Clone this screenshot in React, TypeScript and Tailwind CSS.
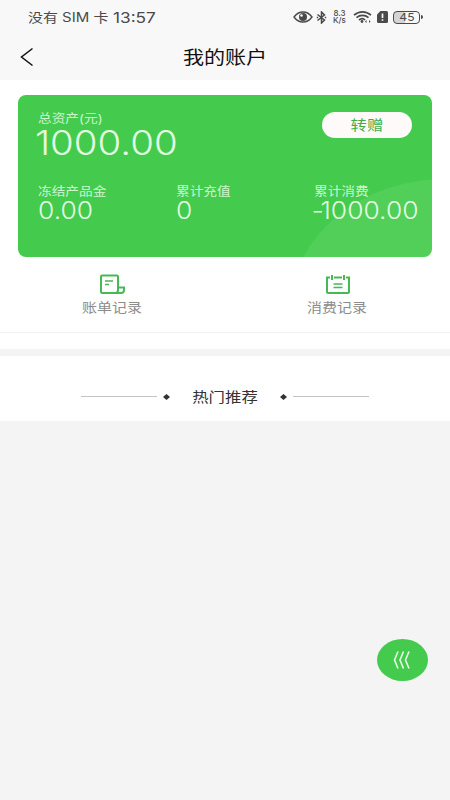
import type { ReactNode } from "react";

const STATS = [
  { label: "冻结产品金", sign: "", value: "0.00" },
  { label: "累计充值", sign: "", value: "0" },
  { label: "累计消费", sign: "-", value: "1000.00" },
];

function StatusBar() {
  return (
    <div className="flex h-[34px] items-center justify-between pl-7 pr-[27px] text-[#4a4a4a]">
      <div className="flex origin-left scale-x-[1.15] items-center whitespace-nowrap pt-px">
        <span className="text-[13px]">没有 SIM 卡</span>
        <span className="ml-1 pt-px text-[15px]">13:57</span>
      </div>
      <div className="flex items-center">
        {/* Modo lectura */}
        <svg className="h-3 w-5" viewBox="0 0 20 12" fill="none">
          <path d="M1 6C4 1.800 7 1 10 1s6 .8 9 5c-3 4.200-6 5-9 5S4 10.200 1 6Z" stroke="currentColor" strokeWidth="1.400" />
          <circle cx="10" cy="6" r="4" fill="currentColor" />
          <circle cx="8.500" cy="4.500" r="1.300" fill="#f8f8f8" />
        </svg>
        {/* Bluetooth */}
        <svg className="ml-[3px] h-[13px] w-[11px]" viewBox="0 0 11 13" fill="none" stroke="currentColor" strokeWidth="1.500">
          <path d="M1.500 3.500 8.500 9 5.500 12V1l3 3-7 5.500" />
          <path d="M.8 6.500h1.400M8.800 6.500h1.400" strokeWidth="1.600" />
        </svg>
        <div className="ml-[5px] w-[15px] whitespace-nowrap text-center text-[8px] font-medium leading-[7px]">
          <div>8.3</div>
          <div>K/s</div>
        </div>
        {/* WiFi */}
        <svg className="ml-1.5 h-3 w-[19px]" viewBox="0 0 19 12" fill="none" stroke="currentColor" strokeWidth="1.700">
          <path d="M1 4.200C6-.2 13-.2 18 4.200M3.500 6.700c3.500-3 8.500-3 12 0M6 9c2-1.700 4.500-1.700 6 0" />
          <circle cx="9" cy="10.500" r="1.400" fill="currentColor" stroke="none" />
          <path d="m12 10.500 1.500-1.400v2.800ZM17.500 10.500 16 9.100v2.800Z" fill="currentColor" stroke="none" />
        </svg>
        {/* SIM */}
        <svg className="ml-[5px] h-3 w-[11px]" viewBox="0 0 11 12">
          <path d="M3.500 0H9.500Q11 0 11 1.500v9Q11 12 9.500 12h-8Q0 12 0 10.500V3.500Z" fill="currentColor" />
          <path d="M5.500 2.500v4.500M5.500 8.200v1.600" stroke="#f8f8f8" strokeWidth="1.700" />
        </svg>
        <div className="ml-[5px] flex h-[13px] w-[27px] items-center justify-center rounded border border-[#4a4a4a] bg-[linear-gradient(90deg,#d4d4d4_45%,#f8f8f8_45%)] text-[11px] leading-none">
          <span className="scale-x-[1.1]">45</span>
        </div>
        <div className="ml-px h-1 w-0.5 rounded-r bg-[#4a4a4a]" />
      </div>
    </div>
  );
}

function Shortcut({ label, children }: { label: string; children: ReactNode }) {
  return (
    <div className="flex w-1/2 flex-col items-center">
      {children}
      <span className="mt-0.5 scale-x-[1.15] text-[13px] leading-5 text-[#8c8c8c]">{label}</span>
    </div>
  );
}

function Divider() {
  return <div className="h-px w-[76px] bg-[#c4c4c4]" />;
}

function Diamond() {
  return (
    <svg className="h-[6px] w-[7px]" viewBox="0 0 7 6">
      <path d="M3.500 0 7 3 3.500 6 0 3Z" fill="#333" />
    </svg>
  );
}

export default function App() {
  return (
    <div className="relative h-[800px] w-[450px] overflow-hidden bg-[#f4f4f4] font-[Inter,'Noto_Sans_CJK_SC',sans-serif]">
      <header className="h-20 bg-[#f8f8f8]">
        <StatusBar />
        <div className="grid h-[46px] grid-cols-[1fr_auto_1fr] items-center">
          <svg className="ml-5 h-5 w-[14px]" viewBox="0 0 14 20" fill="none" stroke="#111" strokeWidth="1.500">
            <path d="M12.500 1.500 1.500 10l11 8.500" />
          </svg>
          <h1 className="scale-x-[1.17] pt-px text-[18px] leading-6 text-[#111]">我的账户</h1>
        </div>
      </header>

      <section className="h-[253px] border-b border-[#f1f1f1] bg-white px-[18px] pt-[15px]">
        <div className="relative h-[162px] overflow-hidden rounded-lg bg-[#44cb4d] text-[#e2fbe1]">
          {/* Círculo claro de la esquina */}
          <div className="absolute left-[273px] top-[84px] h-[258px] w-[310px] rounded-[50%] bg-white/[0.07]" />
          <div className="relative flex h-[88px] justify-between pl-5 pr-5 pt-4">
            <div className="flex flex-col items-start whitespace-nowrap">
              <span className="origin-left scale-x-[1.14] text-[12px] leading-4 text-[#cdf5cd]">总资产(元)</span>
              <span className="-ml-[3px] origin-left scale-x-[1.13] text-[34px] font-light leading-8">1000.00</span>
            </div>
            <button className="mt-px flex h-[26px] w-[90px] items-center justify-center rounded-full bg-[#fdfaf9] pb-px text-[14px] text-[#3fae4a]">
              <span className="scale-x-[1.17]">转赠</span>
            </button>
          </div>
          <div className="relative grid grid-cols-3">
            {STATS.map(({ label, sign, value }) => (
              <div key={label} className="flex flex-col items-start whitespace-nowrap pl-5">
                <span className="origin-left scale-x-[1.14] text-[12px] leading-[18px] text-[#cdf5cd]">{label}</span>
                <span className="origin-left scale-x-[1.1] text-[24px] font-light leading-5">
                  {sign && <span className="-ml-0.5 -mr-[3px]">{sign}</span>}
                  {value}
                </span>
              </div>
            ))}
          </div>
        </div>

        <div className="-mx-[18px] flex pt-[17px]">
          <Shortcut label="账单记录">
            <svg className="h-[21px] w-[25px]" viewBox="0 0 25 21" fill="none" stroke="#46b955" strokeWidth="2">
              <path d="M18 13V2.500Q18 1.500 17 1.500H2Q1 1.500 1 2.500v15Q1 19 2.500 19H21q3 0 3-3v-2.500h-6V16q0 3-2.500 3" />
              <path d="M5 7h8M5 10.500h4" strokeWidth="1.600" />
            </svg>
          </Shortcut>
          <Shortcut label="消费记录">
            <svg className="h-[21px] w-6" viewBox="0 0 24 21" fill="none" stroke="#46b955" strokeWidth="2">
              <path d="M4 3.500H1V18q0 1 1 1h20q1 0 1-1V3.500h-3M8 3.500h8M6 1v5M18 1v5" />
              <path d="M7.500 10h9M7.500 13.500h9" strokeWidth="1.600" />
            </svg>
          </Shortcut>
        </div>
      </section>

      <div className="h-4 bg-white" />
      <div className="h-[7px]" />

      <section className="flex h-[65px] items-center bg-white pl-[81px] pt-4">
        <Divider />
        <div className="ml-1.5">
          <Diamond />
        </div>
        <h2 className="flex w-[110px] justify-center text-[14px] leading-5 text-[#333]">
          <span className="scale-x-[1.17]">热门推荐</span>
        </h2>
        <Diamond />
        <div className="ml-1.5">
          <Divider />
        </div>
      </section>

      {/* Botón flotante */}
      <button className="absolute left-[377px] top-[639px] flex h-[42px] w-[51px] items-center justify-center rounded-[50%] bg-[#44cb4d]">
        <svg className="-ml-0.5 h-[18px] w-[17px]" viewBox="0 0 17 18" fill="none" stroke="#e8fbe6" strokeWidth="1.600">
          <path d="M5 .5 1.500 9 5 17.500M10.500.5 7 9l3.500 8.500M16 .5 12.500 9l3.500 8.500" />
        </svg>
      </button>
    </div>
  );
}
